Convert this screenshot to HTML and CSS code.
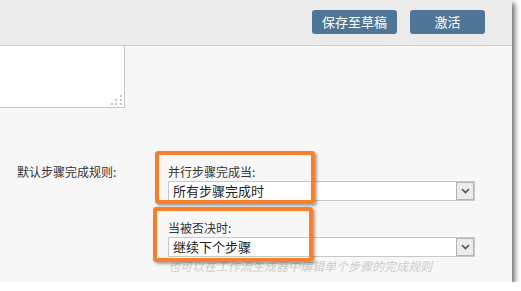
FILE: index.html
```html
<!DOCTYPE html>
<html lang="zh-CN">
<head>
<meta charset="utf-8">
<link rel="stylesheet" href="styles.css">
</head>
<body>
<div class="panel">
  <div class="toolbar">
    <button class="btn btn-draft">保存至草稿</button>
    <button class="btn btn-activate">激活</button>
  </div>
  <div class="textarea">
    <svg class="grip" width="12" height="12" viewBox="0 0 12 12">
      <rect x="9" y="1" width="2" height="2" fill="#c4c4c4"/>
      <rect x="4" y="5" width="2" height="2" fill="#c4c4c4"/>
      <rect x="9" y="5" width="2" height="2" fill="#c4c4c4"/>
      <rect x="0" y="9" width="2" height="2" fill="#c4c4c4"/>
      <rect x="4" y="9" width="2" height="2" fill="#c4c4c4"/>
      <rect x="9" y="9" width="2" height="2" fill="#c4c4c4"/>
    </svg>
  </div>
  <div class="rules">
    <div class="rules-label">默认步骤完成规则:</div>
    <div class="rules-fields">
      <div class="field">
        <div class="field-label">并行步骤完成当:</div>
        <div class="select"><span>所有步骤完成时</span><i class="arrow"><svg width="9" height="6" viewBox="0 0 9 6"><path d="M1 1 L4.5 4.5 L8 1" fill="none" stroke="#555" stroke-width="1.6"/></svg></i></div>
      </div>
      <div class="field field-second">
        <div class="field-label">当被否决时:</div>
        <div class="select"><span>继续下个步骤</span><i class="arrow"><svg width="9" height="6" viewBox="0 0 9 6"><path d="M1 1 L4.5 4.5 L8 1" fill="none" stroke="#555" stroke-width="1.6"/></svg></i></div>
      </div>
      <div class="hint">也可以在工作流生成器中编辑单个步骤的完成规则</div>
    </div>
  </div>
  <div class="callout callout-1"></div>
  <div class="callout callout-2"></div>
</div>
</body>
</html>
```

FILE: styles.css
```css
html, body {
  margin: 0;
  padding: 0;
  background: #ffffff;
}
body {
  font-family: "Noto Sans CJK SC", "Noto Sans", sans-serif;
  font-size: 12px;
  color: #333;
}
.panel {
  position: relative;
  width: 512px;
  height: 282px;
  background: #f7f7f7;
  box-shadow: 3px 3px 5px rgba(0, 0, 0, 0.55);
}
.toolbar {
  height: 46px;
  box-sizing: border-box;
  background: #ebebeb;
  border-bottom: 1px solid #cfcfcf;
  display: flex;
  justify-content: flex-end;
  align-items: flex-start;
  padding: 10px 27px 0 0;
  gap: 13px;
}
.btn {
  height: 24px;
  border: none;
  border-radius: 3px;
  background: #4f7597;
  color: #fff;
  font-family: "Noto Sans CJK SC", sans-serif;
  font-size: 13px;
  line-height: 24px;
  padding: 0;
}
.btn-draft { width: 85px; }
.btn-activate { width: 75px; }
.textarea {
  position: relative;
  width: 124px;
  height: 61px;
  background: #fff;
  border-right: 1px solid #c8c8c8;
  border-bottom: 1px solid #c8c8c8;
}
.grip {
  position: absolute;
  right: 1px;
  bottom: 1px;
}
.rules {
  display: flex;
  margin-top: 56px;
}
.rules-label {
  width: 151px;
  padding-left: 17px;
  line-height: 16px;
  color: #333;
}
.rules-fields {
  width: 307px;
}
.field-label {
  line-height: 16px;
  height: 16px;
  margin-bottom: 1px;
  color: #333;
}
.field-second {
  margin-top: 19px;
}
.select {
  height: 20px;
  box-sizing: border-box;
  border: 1px solid #c8c8c8;
  background: #fff;
  display: flex;
  align-items: center;
  justify-content: space-between;
  padding-left: 4px;
  font-size: 13px;
  color: #222;
}
.select span {
  line-height: 18px;
}
.arrow {
  width: 16px;
  height: 16px;
  margin-right: 0;
  background: #ececec;
  border: 1px solid #b3b3b3;
  display: flex;
  align-items: center;
  justify-content: center;
}
.hint {
  margin-top: 2px;
  line-height: 14px;
  font-style: italic;
  color: #cdcdcd;
  font-family: "Noto Sans CJK SC", serif;
}
.callout {
  position: absolute;
  box-sizing: border-box;
  border: 4px solid #fa7f2a;
  border-radius: 3px;
  box-shadow: 2px 2px 3px rgba(0, 0, 0, 0.35);
}
.callout-1 {
  left: 155px;
  top: 151px;
  width: 160px;
  height: 53px;
}
.callout-2 {
  left: 153px;
  top: 207px;
  width: 160px;
  height: 55px;
}
```
